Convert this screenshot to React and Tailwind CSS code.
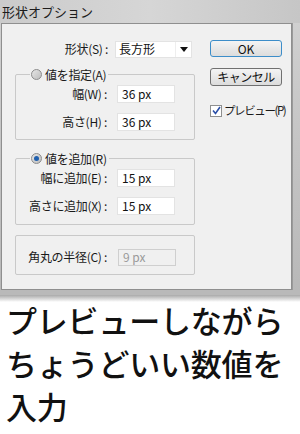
import React from "react";

const jp = { fontFamily: '"Noto Sans CJK JP", "Noto Sans", sans-serif' };

function TextBox({ value, disabled }) {
  return (
    <div
      className={`w-[58px] h-[18px] flex items-center pl-[4px] text-[12px] border ${
        disabled ? "bg-[#f0f0f0] border-[#cfcfcf] text-[#9a9a9a]" : "bg-white border-[#e3e3e3] text-[#111]"
      }`}
    >
      {value}
    </div>
  );
}

function Row({ label, value, disabled }) {
  return (
    <div className="flex items-center">
      <div className="w-[92px] text-right pr-[1px] text-[12px] text-[#1a1a1a] whitespace-nowrap tracking-[-0.3px]">{label}</div>
      <div className="ml-[9px]">
        <TextBox value={value} disabled={disabled} />
      </div>
    </div>
  );
}

function Radio({ checked }) {
  return (
    <div className="w-[11px] h-[11px] rounded-full border border-[#8c8c8c] bg-gradient-to-br from-[#e6e6e6] to-[#bdbdbd] flex items-center justify-center">
      {checked && <div className="w-[5px] h-[5px] rounded-full bg-[#1f5fae]" />}
    </div>
  );
}

function Group({ title, checked, children, className }) {
  return (
    <div className={`relative border border-[#c9c9c9] rounded-[2px] ${className}`}>
      {title && (
        <div className="absolute -top-[8px] left-[14px] flex items-center gap-[3px] bg-[#f0f0f0] pr-[2px] pl-[1px] text-[12px] text-[#1a1a1a] leading-[15px]">
          <Radio checked={checked} />
          <span className="tracking-[-0.3px]">{title}</span>
        </div>
      )}
      {children}
    </div>
  );
}

export default function App() {
  return (
    <div className="w-[300px] h-[434px] bg-white overflow-hidden" style={jp}>
      {/* ダイアログ */}
      <div className="bg-gradient-to-b from-[#d2d2d2] via-[#c4c4c4] to-[#b8b8b8]">
        <div className="h-[23px] flex items-center pl-[2px] text-[13px] text-[#1c1c1c] bg-gradient-to-r from-[#cbcbcb] via-[#d6d6d6] to-[#c6c6c6]">
          形状オプション
        </div>
        <div className="flex">
          <div className="ml-[1px] w-[291px] h-[267px] bg-[#f0f0f0] border border-[#8f8f8f] flex">
            {/* 左カラム */}
            <div className="w-[193px] pl-[13px] pt-[16px]">
              <div className="flex items-center">
                <div className="w-[93px] text-right text-[12px] text-[#1a1a1a] tracking-[-0.3px]">形状(S) :</div>
                <div className="ml-[7px] w-[77px] h-[17px] bg-white border border-[#e3e3e3] flex items-center">
                  <span className="flex-1 pl-[3px] text-[12px] text-[#111]">長方形</span>
                  <div className="w-[16px] h-full border-l border-[#eeeeee] flex items-center justify-center">
                    <svg width="8" height="5" viewBox="0 0 8 5">
                      <path d="M0 0 H8 L4 5 Z" fill="#111" />
                    </svg>
                  </div>
                </div>
              </div>

              <Group title="値を指定(A)" className="mt-[16px] h-[66px] pt-[10px] flex flex-col gap-[10px]">
                <Row label="幅(W) :" value="36 px" />
                <Row label="高さ(H) :" value="36 px" />
              </Group>

              <Group title="値を追加(R)" checked className="mt-[18px] h-[67px] pt-[10px] flex flex-col gap-[10px]">
                <Row label="幅に追加(E) :" value="15 px" />
                <Row label="高さに追加(X) :" value="15 px" />
              </Group>

              <Group className="mt-[10px] h-[40px] pt-[12px]">
                <div className="flex items-center">
                  <div className="w-[92px] text-right pr-[1px] text-[12px] text-[#1a1a1a] tracking-[-0.3px]">角丸の半径(C) :</div>
                  <div className="ml-[10px]">
                    <div className="w-[58px] h-[17px] flex items-center pl-[4px] text-[12px] bg-[#f0f0f0] border border-[#cfcfcf] text-[#9a9a9a]">
                      9 px
                    </div>
                  </div>
                </div>
              </Group>
            </div>

            {/* 右カラム */}
            <div className="pl-[15px] pt-[16px] flex flex-col">
              <button className="w-[72px] h-[17px] rounded-[3px] border border-[#3c8dc9] bg-gradient-to-b from-[#f4f4f4] to-[#dcdcdc] text-[12px] leading-none text-[#111] flex items-center justify-center">
                OK
              </button>
              <button className="mt-[11px] w-[72px] h-[18px] rounded-[3px] border border-[#707070] bg-gradient-to-b from-[#f4f4f4] to-[#dcdcdc] text-[12px] leading-none text-[#111] flex items-center justify-center tracking-[-0.5px]">
                キャンセル
              </button>
              <div className="mt-[16px] flex items-center gap-[2px] whitespace-nowrap">
                <div className="w-[12px] h-[12px] shrink-0 border border-[#8e8f8f] bg-white flex items-center justify-center">
                  <svg width="9" height="9" viewBox="0 0 9 9">
                    <path d="M1 4.5 L3.5 7.5 L8 1" stroke="#2a4fa8" strokeWidth="1.6" fill="none" />
                  </svg>
                </div>
                <span className="text-[11.5px] text-[#1a1a1a] tracking-[-1.4px]">プレビュー(P)</span>
              </div>
            </div>
          </div>
          <div className="flex-1 border-l border-[#9a9a9a]" />
        </div>
        <div className="h-[5px] bg-[#b9b9b9]" />
      </div>
      <div className="h-[7px] bg-gradient-to-b from-[#a9a9a9] to-white" />

      {/* キャプション */}
      <div className="pl-[6px] -mt-[4px] text-[31px] font-medium leading-[43px] text-[#111] tracking-[-0.2px]">
        <div>プレビューしながら</div>
        <div>ちょうどいい数値を</div>
        <div>入力</div>
      </div>
    </div>
  );
}
